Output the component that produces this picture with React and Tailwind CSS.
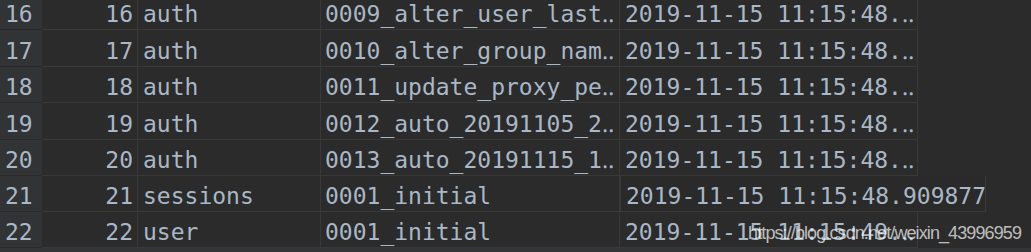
import React from "react";

const rows = [
  { n: 16, id: 16, app: "auth", name: "0009_alter_user_last‥", at: "2019-11-15 11:15:48.‥", h: "h-[37px]" },
  { n: 17, id: 17, app: "auth", name: "0010_alter_group_nam‥", at: "2019-11-15 11:15:48.‥", h: "h-[37px]" },
  { n: 18, id: 18, app: "auth", name: "0011_update_proxy_pe‥", at: "2019-11-15 11:15:48.‥", h: "h-[36px]" },
  { n: 19, id: 19, app: "auth", name: "0012_auto_20191105_2‥", at: "2019-11-15 11:15:48.‥", h: "h-[37px]" },
  { n: 20, id: 20, app: "auth", name: "0013_auto_20191115_1‥", at: "2019-11-15 11:15:48.‥", h: "h-[36px]" },
  { n: 21, id: 21, app: "sessions", name: "0001_initial", at: "2019-11-15 11:15:48.909877", h: "h-[36px]", open: true },
  { n: 22, id: 22, app: "user", name: "0001_initial", at: "2019-11-15 11:15:49.‥", h: "h-[36px]" },
];

const Row = ({ r }) => {
  return (
    <div className={`flex ${r.h}`}>
      {/* row number gutter */}
      <div className="w-[42px] shrink-0 flex items-center pl-[5px] pt-[6px] bg-[#313335] border-b border-[#2a2a2a]">
        {r.n}
      </div>
      <div className="w-[96px] shrink-0 flex items-center justify-end pr-[4px] pt-[6px] border-r border-b border-[#383838]">
        {r.id}
      </div>
      <div className="w-[183px] shrink-0 flex items-center pl-[5px] pt-[6px] border-r border-b border-[#383838]">
        {r.app}
      </div>
      <div className="w-[299px] shrink-0 flex items-center pl-[4px] pt-[6px] border-r border-b border-[#383838] whitespace-pre overflow-hidden">
        {r.name}
      </div>
      {r.open ? (
        <div className="w-[366px] shrink-0 flex items-center pl-[5px] pt-[6px] border border-t-0 border-[#393939] bg-[#2a2a2a] whitespace-pre overflow-hidden">
          {r.at}
        </div>
      ) : (
        <div className="w-[298px] shrink-0 flex items-center pl-[5px] pt-[6px] border-r border-b border-[#383838] whitespace-pre overflow-hidden">
          {r.at}
        </div>
      )}
      <div className="flex-1" />
    </div>
  );
};

export default function App() {
  return (
    <div className="relative w-[1031px] h-[252px] overflow-hidden bg-[#2b2b2b] flex flex-col text-[23px] leading-none text-[#a9b7c6] font-['DejaVu_Sans_Mono',monospace]">
      <div className="-mt-[7px] flex flex-col">
        {rows.map((r) => (
          <Row key={r.n} r={r} />
        ))}
      </div>
      {/* status strip */}
      <div className="flex-1 bg-[#333537]" />

      {/* watermark */}
      <div className="absolute right-[10px] bottom-[10px] text-[18px] tracking-[-0.9px] leading-none text-white/70 font-['Liberation_Sans',Arial,sans-serif]">
        https://blog.csdn.net/weixin_43996959
      </div>
    </div>
  );
}
